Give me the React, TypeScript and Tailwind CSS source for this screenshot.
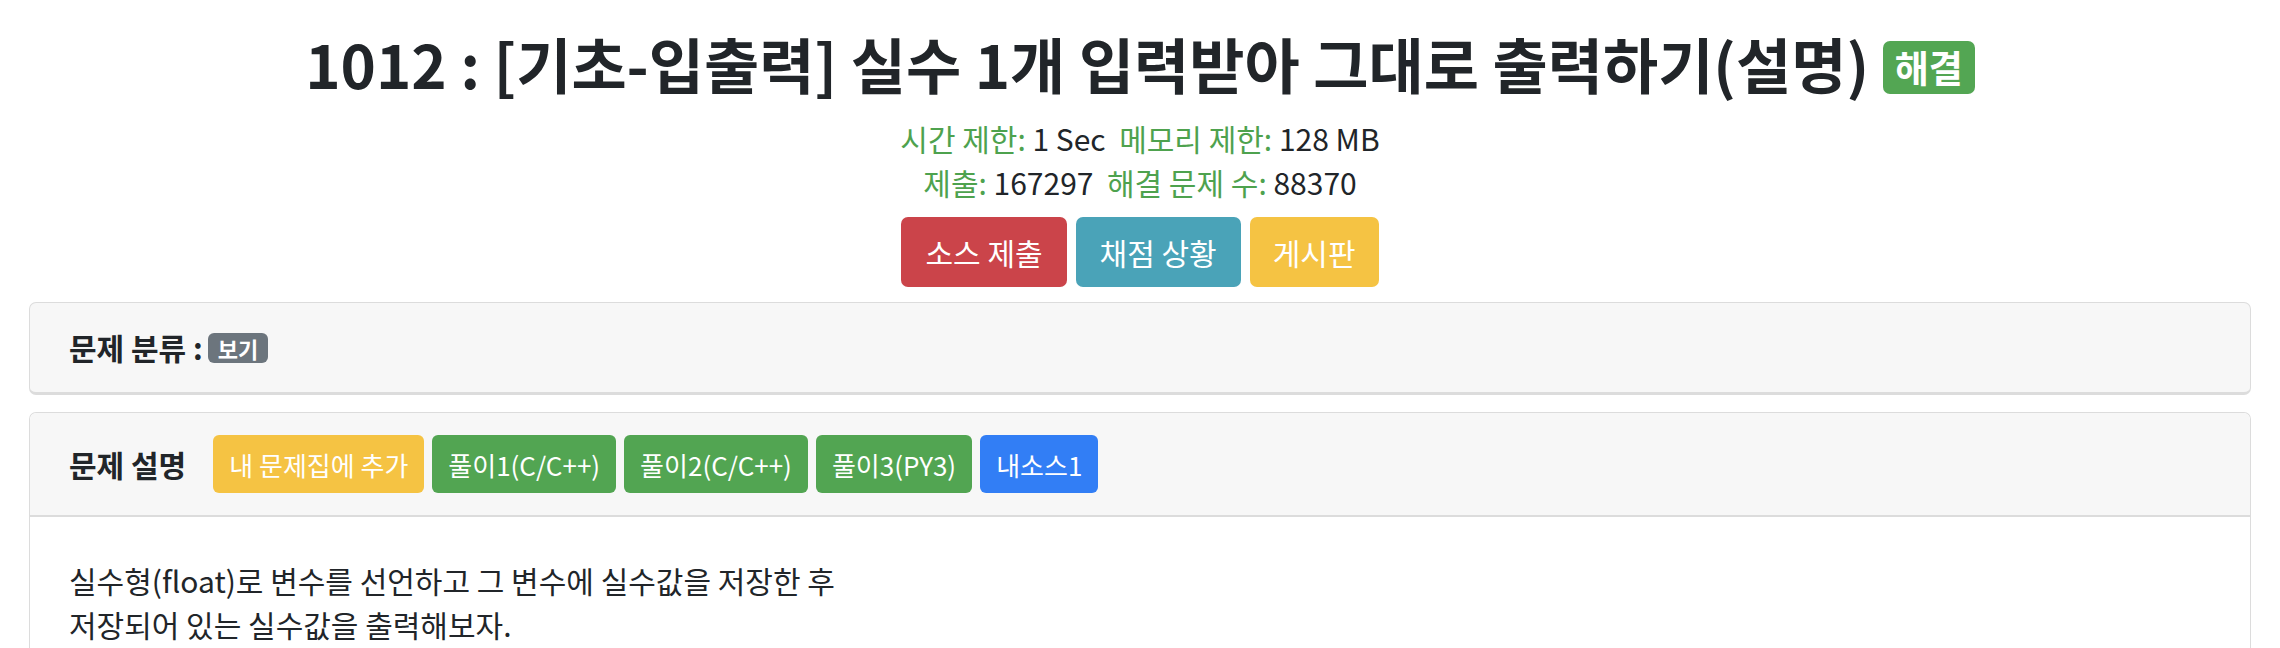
import React from "react";

const headerButtons = [
  { label: "내 문제집에 추가", color: "bg-[#f5c343]" },
  { label: "풀이1(C/C++)", color: "bg-[#52a552]" },
  { label: "풀이2(C/C++)", color: "bg-[#52a552]" },
  { label: "풀이3(PY3)", color: "bg-[#52a552]" },
  { label: "내소스1", color: "bg-[#327ef5]" },
];

function Stat({ label, value }: { label: string; value: string }) {
  return (
    <span>
      <span className="text-[#4ea24e]">{label}:</span> {value}
    </span>
  );
}

export default function App() {
  return (
    <div className="w-full min-h-screen bg-white text-[#212529] font-['Noto_Sans_CJK_KR','Noto_Sans',sans-serif] px-[29px]">
      {/* Title */}
      <div className="text-center">
        <h1 className="pt-[28px] text-[60px] leading-[70px] font-bold">
          1012 : [기초-입출력] 실수 1개 입력받아 그대로 출력하기(설명){" "}
          <span className="inline-block align-[6px] rounded-[7px] bg-[#53a653] px-[12px] text-[37px] leading-[53px] font-bold text-white">
            해결
          </span>
        </h1>
        <div className="mt-[18px] text-[30px] leading-[44px]">
          <Stat label="시간 제한" value="1 Sec" />
          &nbsp; <Stat label="메모리 제한" value="128 MB" />
        </div>
        <div className="text-[30px] leading-[44px]">
          <Stat label="제출" value="167297" />
          &nbsp; <Stat label="해결 문제 수" value="88370" />
        </div>
        <div className="mt-[13px] flex justify-center gap-[9px]">
          <button className="h-[70px] rounded-[7px] bg-[#cb444a] px-[24px] text-[30px] text-white">소스 제출</button>
          <button className="h-[70px] rounded-[7px] bg-[#4aa3b8] px-[24px] text-[30px] text-white">채점 상황</button>
          <button className="h-[70px] rounded-[7px] bg-[#f5c343] px-[23px] text-[30px] text-white">게시판</button>
        </div>
      </div>

      {/* 문제 분류 */}
      <div className="mt-[15px] h-[93px] rounded-[7px] border border-b-[3px] border-[#dcdcdc] bg-[#f7f7f7] flex items-center px-[39px]">
        <span className="text-[30px] font-bold">문제 분류 :</span>
        <span className="ml-[5px] rounded-[6px] bg-[#6c757d] px-[10px] text-[22px] leading-[30px] font-bold text-white">
          보기
        </span>
      </div>

      {/* 문제 설명 */}
      <div className="mt-[17px] rounded-t-[7px] border border-b-0 border-[#dcdcdc]">
        <div className="h-[104px] rounded-t-[7px] bg-[#f7f7f7] border-b-2 border-[#dcdcdc] flex items-center px-[39px]">
          <span className="text-[30px] font-bold">문제 설명</span>
          <div className="ml-[27px] flex gap-[8px]">
            {headerButtons.map((b) => (
              <button
                key={b.label}
                className={`h-[58px] rounded-[6px] px-[16px] text-[26px] text-white ${b.color}`}
              >
                {b.label}
              </button>
            ))}
          </div>
        </div>
        <div className="px-[39px] pt-[41px] pb-[20px] text-[30px] leading-[44px]">
          <p>실수형(float)로 변수를 선언하고 그 변수에 실수값을 저장한 후</p>
          <p>저장되어 있는 실수값을 출력해보자.</p>
        </div>
      </div>
    </div>
  );
}
